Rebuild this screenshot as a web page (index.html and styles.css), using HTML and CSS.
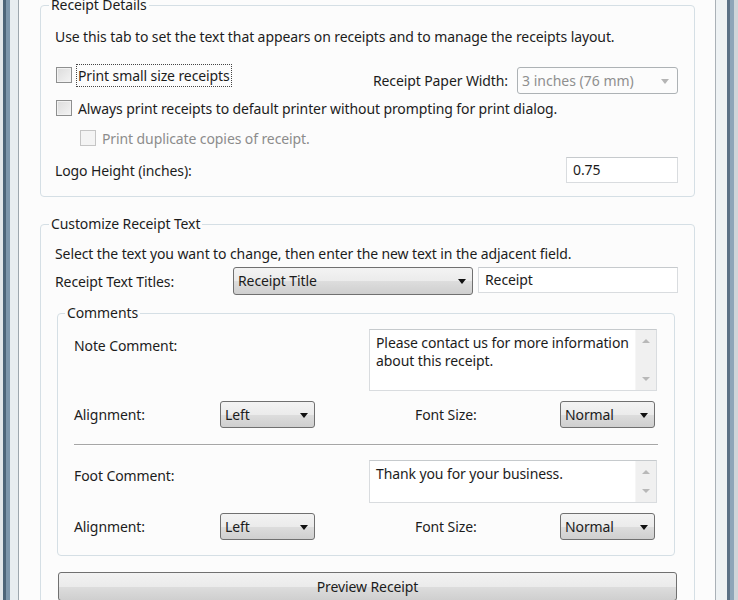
FILE: index.html
```html
<!DOCTYPE html>
<html lang="en">
  <head>
    <meta charset="UTF-8" />
    <meta name="viewport" content="width=device-width, initial-scale=1.0" />
    <title>Receipt Settings</title>
    <link rel="stylesheet" href="styles.css">
  </head>

  <body>
    <div class="window">
      <div class="edge edge-left"></div>

      <main class="page">
        <fieldset class="group details">
          <legend>Receipt Details</legend>
          <p class="intro">Use this tab to set the text that appears on receipts and to manage the receipts layout.</p>

          <div class="row row-small">
            <label class="check focused"><span class="box"></span><span class="focus">Print small size receipts</span></label>
            <div class="paper">
              <span class="paper-label">Receipt Paper Width:</span>
              <div class="combo combo-disabled">3 inches (76 mm)<span class="arrow"></span></div>
            </div>
          </div>

          <label class="check row-always"><span class="box"></span>Always print receipts to default printer without prompting for print dialog.</label>

          <label class="check check-disabled row-dup"><span class="box"></span>Print duplicate copies of receipt.</label>

          <div class="row row-logo">
            <span>Logo Height (inches):</span>
            <div class="textbox logo-input">0.75</div>
          </div>
        </fieldset>

        <fieldset class="group customize">
          <legend>Customize Receipt Text</legend>
          <p class="intro intro-2">Select the text you want to change, then enter the new text in the adjacent field.</p>

          <div class="row row-titles">
            <span class="titles-label">Receipt Text Titles:</span>
            <div class="combo titles-combo">Receipt Title<span class="arrow"></span></div>
            <div class="textbox titles-input">Receipt</div>
          </div>

          <fieldset class="group comments">
            <legend>Comments</legend>

            <div class="row comment-row note-row">
              <span class="comment-label">Note Comment:</span>
              <div class="memo note-memo">
                <div class="memo-text">Please contact us for more information about this receipt.</div>
                <div class="scroll"><span class="up"></span><span class="down"></span></div>
              </div>
            </div>

            <div class="row align-row">
              <span class="align-label">Alignment:</span>
              <div class="combo small-combo">Left<span class="arrow"></span></div>
              <span class="size-label">Font Size:</span>
              <div class="combo small-combo">Normal<span class="arrow"></span></div>
            </div>

            <div class="divider"></div>

            <div class="row comment-row foot-row">
              <span class="comment-label">Foot Comment:</span>
              <div class="memo foot-memo">
                <div class="memo-text">Thank you for your business.</div>
                <div class="scroll"><span class="up"></span><span class="down"></span></div>
              </div>
            </div>

            <div class="row align-row">
              <span class="align-label">Alignment:</span>
              <div class="combo small-combo">Left<span class="arrow"></span></div>
              <span class="size-label">Font Size:</span>
              <div class="combo small-combo">Normal<span class="arrow"></span></div>
            </div>
          </fieldset>

          <button class="btn preview" type="button">Preview Receipt</button>
        </fieldset>
      </main>

      <div class="edge edge-right"></div>
    </div>
  </body>
</html>
```

FILE: styles.css
```css
html,
body {
  margin: 0;
  height: 600px;
  overflow: hidden;
}

body {
  background-color: #fcfcfc;
  font-family: "Noto Sans", "Open Sans", sans-serif;
  font-size: 14px;
  letter-spacing: -0.1px;
  color: #1c1c1c;
}

.window {
  display: flex;
  height: 600px;
}

.edge {
  flex: none;
  height: 600px;
}

.edge-left {
  width: 19px;
  background: linear-gradient(
    to right,
    #e3e7ea 0 3px,
    #4d6579 3px 6px,
    #7d96ab 6px 10px,
    #e8edf0 10px 18px,
    #9ea7ae 18px 19px
  );
}

.edge-right {
  width: 23px;
  background: linear-gradient(
    to right,
    #aab1b7 0 1px,
    #eef2f4 1px 12px,
    #5b7186 12px 15px,
    #8ea5b8 15px 19px,
    #d0d5d9 19px 23px
  );
}

.page {
  flex: 1;
  padding: 0 20px 0 21px;
  overflow: hidden;
}

/* group boxes */
.group {
  margin: 0;
  padding: 0 16px 0 14px;
  border: 1px solid #d5dfe5;
  border-radius: 4px;
  min-width: 0;
}

.group legend {
  margin-left: -6px;
  padding: 0 2px;
  line-height: 20px;
  height: 20px;
}

.details {
  margin-top: -5px;
  padding-bottom: 13px;
}

.customize {
  margin-top: 17px;
  padding-bottom: 30px;
}

.intro {
  margin: 12px 0 0 0;
  line-height: 20px;
  white-space: nowrap;
}

.intro-2 {
  margin-top: 10px;
}

.row {
  display: flex;
  align-items: center;
}

/* checkboxes */
.check {
  display: flex;
  align-items: center;
  height: 16px;
  white-space: nowrap;
}

.box {
  width: 14px;
  height: 14px;
  margin: 0 6px 0 1px;
  border: 1px solid #8e8f8f;
  background: linear-gradient(to bottom right, #dcdcdc, #f4f4f4);
  box-shadow: inset 0 0 0 1px #f2f2f2;
  flex: none;
}

.focus {
  outline: 1px dotted #444;
  outline-offset: 1px;
}

.row-small {
  margin-top: 20px;
  height: 26px;
  align-items: flex-start;
  justify-content: space-between;
}

.paper {
  display: flex;
  align-items: center;
  gap: 9px;
}

.row-always {
  margin-top: 7px;
}

.row-dup {
  margin-top: 14px;
  margin-left: 24px;
  color: #8c8c8c;
}

.check-disabled .box {
  background: #f4f4f4;
  border-color: #c5c5c5;
  box-shadow: none;
}

.row-logo {
  margin-top: 11px;
  justify-content: space-between;
}

/* inputs */
.textbox {
  box-sizing: border-box;
  height: 26px;
  line-height: 24px;
  padding: 0 6px;
  background: #fff;
  border: 1px solid #d9dcdf;
  border-top-color: #c6cacd;
  white-space: nowrap;
}

.logo-input {
  width: 112px;
}

.combo {
  position: relative;
  box-sizing: border-box;
  height: 27px;
  line-height: 25px;
  padding: 0 20px 0 4px;
  border: 1px solid #707070;
  border-radius: 3px;
  background: linear-gradient(to bottom, #f3f3f3 0, #ebebeb 50%, #dddddd 51%, #cfcfcf 100%);
  white-space: nowrap;
}

.arrow {
  position: absolute;
  right: 6px;
  top: 11px;
  width: 0;
  height: 0;
  border-left: 4px solid transparent;
  border-right: 4px solid transparent;
  border-top: 5px solid #111;
}

.combo-disabled {
  width: 161px;
  height: 27px;
  color: #8f8f8f;
  background: #fcfcfc;
  border-color: #adb2b5;
  letter-spacing: 0;
}

.combo-disabled .arrow {
  right: 8px;
  border-top-color: #b5b5b5;
}

.row-titles {
  margin-top: 3px;
  height: 28px;
}

.titles-label {
  width: 178px;
  flex: none;
}

.titles-combo {
  width: 240px;
  height: 28px;
  line-height: 26px;
}

.titles-input {
  margin-left: 5px;
  width: 200px;
  height: 26px;
  align-self: flex-start;
}

/* comments group */
.comments {
  margin: 8px 3px 0 2px;
  padding: 0 16px 15px 16px;
}

.comments legend {
  margin-left: -9px;
}

.comment-row {
  align-items: flex-start;
}

.comment-label {
  width: 295px;
  flex: none;
}

.note-row {
  margin-top: 6px;
}

.note-row .comment-label {
  padding-top: 7px;
}

.foot-row {
  margin-top: 14px;
}

.foot-row .comment-label {
  padding-top: 6px;
}

.memo {
  display: flex;
  box-sizing: border-box;
  width: 288px;
  background: #fff;
  border: 1px solid #d9dcdf;
  border-top-color: #c6cacd;
}

.note-memo {
  height: 62px;
}

.foot-memo {
  height: 43px;
}

.memo-text {
  flex: 1;
  padding: 4px 0 2px 6px;
  line-height: 18px;
}

.scroll {
  position: relative;
  width: 20px;
  flex: none;
  background: #f0f0f0;
  border-left: 1px solid #f6f6f6;
}

.up,
.down {
  position: absolute;
  left: 6px;
  width: 0;
  height: 0;
  border-left: 4px solid transparent;
  border-right: 4px solid transparent;
}

.up {
  top: 9px;
  border-bottom: 4px solid #b8b8b8;
}

.down {
  bottom: 9px;
  border-top: 4px solid #b8b8b8;
}

.align-row {
  margin-top: 10px;
  height: 27px;
}

.align-label {
  width: 146px;
  flex: none;
}

.small-combo {
  width: 95px;
}

.size-label {
  margin-left: 100px;
  width: 145px;
  flex: none;
}

.divider {
  margin-top: 16px;
  height: 1px;
  background: #a6a6a6;
  border-bottom: 1px solid #fff;
}

/* button */
.btn {
  display: block;
  box-sizing: border-box;
  width: 619px;
  height: 29px;
  margin: 16px 0 0 3px;
  padding: 0;
  border: 1px solid #707070;
  border-radius: 3px;
  background: linear-gradient(to bottom, #f2f2f2 0, #ebebeb 50%, #dddddd 51%, #cfcfcf 100%);
  font-family: inherit;
  font-size: 14px;
  letter-spacing: -0.1px;
  color: #1c1c1c;
}
```
